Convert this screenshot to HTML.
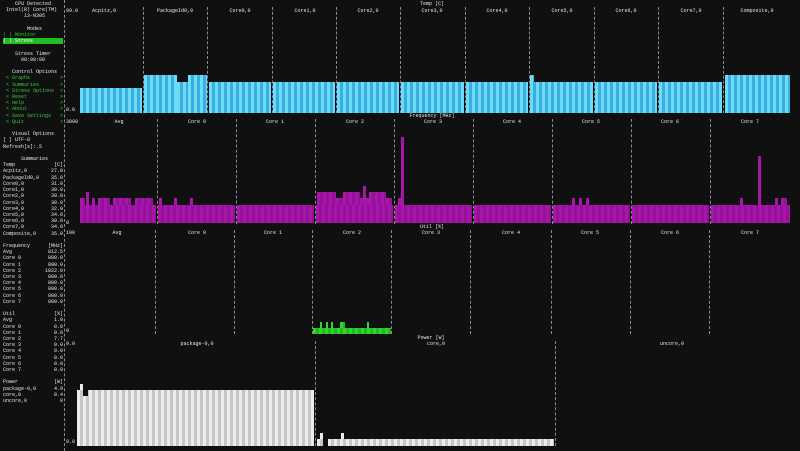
<!DOCTYPE html>
<html><head><meta charset="utf-8"><style>
*{margin:0;padding:0}
body{width:800px;height:451px;background:#101010;overflow:hidden;position:relative;font-family:"Liberation Mono",monospace;font-size:5px;color:#e8e8e8}
pre{position:absolute;left:3px;top:1px;font-family:inherit;font-size:5px;line-height:6.2px;white-space:pre;color:#e8e8e8}
.g{color:#33cc33}
.sel{background:#22bb22;color:#fff}
.t{position:absolute;white-space:nowrap;line-height:6px;transform:translateX(-50%)}
.l{position:absolute;white-space:nowrap;line-height:6px}
.v{position:absolute;width:0;border-left:1px dashed #8a8a8a}
.c{position:absolute;background:repeating-linear-gradient(90deg,#6cdcf6 0 3px,#3aaee0 3px 6px)}
.m{position:absolute;background:repeating-linear-gradient(90deg,#a616a8 0 3px,#96109a 3px 6px)}
.gr{position:absolute;background:repeating-linear-gradient(90deg,#2fd42f 0 3px,#22b822 3px 6px)}
.w{position:absolute;background:repeating-linear-gradient(90deg,#ececec 0 3px,#c6c6c6 3px 6px)}
</style></head><body>
<pre>    CPU Detected
 Intel(R) Core(TM)
       i3-N305

        Modes
<span class="g">( ) Monitor</span>
<span class="sel">( ) Stress          </span>

    Stress Timer
      00:00:00

   Control Options
<span class="g"> &lt; Graphs          &gt;
 &lt; Summaries       &gt;
 &lt; Stress Options  &gt;
 &lt; Reset           &gt;
 &lt; Help            &gt;
 &lt; About           &gt;
 &lt; Save Settings   &gt;
 &lt; Quit            &gt;</span>

   Visual Options
[ ] UTF-8
Refresh[s]:.5

      Summaries
Temp             [C]
Acpitz,0        27.0
PackageId0,0    35.0
Core0,0         31.0
Core1,0         30.0
Core2,0         30.0
Core3,0         30.0
Core4,0         32.0
Core5,0         34.0
Core6,0         30.0
Core7,0         34.0
Composite,0     35.0

Frequency      [MHz]
Avg            812.5
Core 0         800.0
Core 1         800.0
Core 2        1022.0
Core 3         800.0
Core 4         800.0
Core 5         800.0
Core 6         800.0
Core 7         800.0

Util             [%]
Avg              1.0
Core 0           0.0
Core 1           0.0
Core 2           7.7
Core 3           0.0
Core 4           0.0
Core 5           0.0
Core 6           0.0
Core 7           0.0

Power            [W]
package-0,0      4.9
core,0           0.4
uncore,0           0</pre>
<div class="v" style="left:64px;top:0;height:451px"></div>

<!-- TEMP -->
<div class="t" style="left:432px;top:1px">Temp [C]</div>
<div class="l" style="left:66px;top:8px">99.0</div>
<div class="l" style="left:66px;top:107px">0.0</div>
<div class="t" style="left:104px;top:8px">Acpitz,0</div>
<div class="t" style="left:175px;top:8px">PackageId0,0</div>
<div class="t" style="left:240px;top:8px">Core0,0</div>
<div class="t" style="left:305px;top:8px">Core1,0</div>
<div class="t" style="left:368px;top:8px">Core2,0</div>
<div class="t" style="left:432px;top:8px">Core3,0</div>
<div class="t" style="left:497px;top:8px">Core4,0</div>
<div class="t" style="left:562px;top:8px">Core5,0</div>
<div class="t" style="left:626px;top:8px">Core6,0</div>
<div class="t" style="left:691px;top:8px">Core7,0</div>
<div class="t" style="left:757px;top:8px">Composite,0</div>
<div class="v" style="left:143px;top:7px;height:106px"></div>
<div class="v" style="left:207px;top:7px;height:106px"></div>
<div class="v" style="left:272px;top:7px;height:106px"></div>
<div class="v" style="left:336px;top:7px;height:106px"></div>
<div class="v" style="left:400px;top:7px;height:106px"></div>
<div class="v" style="left:465px;top:7px;height:106px"></div>
<div class="v" style="left:529px;top:7px;height:106px"></div>
<div class="v" style="left:594px;top:7px;height:106px"></div>
<div class="v" style="left:658px;top:7px;height:106px"></div>
<div class="v" style="left:723px;top:7px;height:106px"></div>
<div class="c" style="left:80px;top:88px;width:62px;height:25px"></div>
<div class="c" style="left:144px;top:75px;width:33px;height:38px"></div>
<div class="c" style="left:177px;top:82px;width:11px;height:31px"></div>
<div class="c" style="left:188px;top:75px;width:19px;height:38px"></div>
<div class="c" style="left:209px;top:82px;width:62px;height:31px"></div>
<div class="c" style="left:273px;top:82px;width:62px;height:31px"></div>
<div class="c" style="left:337px;top:82px;width:62px;height:31px"></div>
<div class="c" style="left:401px;top:82px;width:63px;height:31px"></div>
<div class="c" style="left:466px;top:82px;width:62px;height:31px"></div>
<div class="c" style="left:530px;top:75px;width:4px;height:7px"></div>
<div class="c" style="left:530px;top:82px;width:63px;height:31px"></div>
<div class="c" style="left:595px;top:82px;width:62px;height:31px"></div>
<div class="c" style="left:659px;top:82px;width:63px;height:31px"></div>
<div class="c" style="left:725px;top:75px;width:65px;height:38px"></div>

<!-- FREQ -->
<div class="t" style="left:432px;top:113px">Frequency [MHz]</div>
<div class="l" style="left:66px;top:119px">3000</div>
<div class="l" style="left:66px;top:220px">0</div>
<div class="t" style="left:119px;top:119px">Avg</div>
<div class="t" style="left:197px;top:119px">Core 0</div>
<div class="t" style="left:275px;top:119px">Core 1</div>
<div class="t" style="left:355px;top:119px">Core 2</div>
<div class="t" style="left:433px;top:119px">Core 3</div>
<div class="t" style="left:512px;top:119px">Core 4</div>
<div class="t" style="left:591px;top:119px">Core 5</div>
<div class="t" style="left:670px;top:119px">Core 6</div>
<div class="t" style="left:750px;top:119px">Core 7</div>
<div class="v" style="left:157px;top:119px;height:105px"></div>
<div class="v" style="left:236px;top:119px;height:105px"></div>
<div class="v" style="left:315px;top:119px;height:105px"></div>
<div class="v" style="left:394px;top:119px;height:105px"></div>
<div class="v" style="left:473px;top:119px;height:105px"></div>
<div class="v" style="left:552px;top:119px;height:105px"></div>
<div class="v" style="left:631px;top:119px;height:105px"></div>
<div class="v" style="left:710px;top:119px;height:105px"></div>
<div class="m" style="left:80px;top:205px;width:76px;height:18px"></div>
<div class="m" style="left:158px;top:205px;width:77px;height:18px"></div>
<div class="m" style="left:237px;top:205px;width:77px;height:18px"></div>
<div class="m" style="left:316px;top:205px;width:77px;height:18px"></div>
<div class="m" style="left:395px;top:205px;width:77px;height:18px"></div>
<div class="m" style="left:474px;top:205px;width:77px;height:18px"></div>
<div class="m" style="left:553px;top:205px;width:77px;height:18px"></div>
<div class="m" style="left:632px;top:205px;width:77px;height:18px"></div>
<div class="m" style="left:711px;top:205px;width:79px;height:18px"></div>
<div class="m" style="left:80px;top:198px;width:5px;height:7px"></div>
<div class="m" style="left:86px;top:192px;width:3px;height:13px"></div>
<div class="m" style="left:92px;top:198px;width:3px;height:7px"></div>
<div class="m" style="left:98px;top:198px;width:12px;height:7px"></div>
<div class="m" style="left:113px;top:198px;width:18px;height:7px"></div>
<div class="m" style="left:135px;top:198px;width:18px;height:7px"></div>
<div class="m" style="left:159px;top:198px;width:3px;height:7px"></div>
<div class="m" style="left:174px;top:198px;width:3px;height:7px"></div>
<div class="m" style="left:190px;top:198px;width:3px;height:7px"></div>
<div class="m" style="left:317px;top:192px;width:19px;height:13px"></div>
<div class="m" style="left:336px;top:198px;width:7px;height:7px"></div>
<div class="m" style="left:343px;top:192px;width:17px;height:13px"></div>
<div class="m" style="left:360px;top:198px;width:3px;height:7px"></div>
<div class="m" style="left:363px;top:186px;width:3px;height:19px"></div>
<div class="m" style="left:366px;top:198px;width:3px;height:7px"></div>
<div class="m" style="left:369px;top:192px;width:17px;height:13px"></div>
<div class="m" style="left:386px;top:198px;width:6px;height:7px"></div>
<div class="m" style="left:398px;top:198px;width:3px;height:7px"></div>
<div class="m" style="left:401px;top:137px;width:3px;height:68px"></div>
<div class="m" style="left:572px;top:198px;width:3px;height:7px"></div>
<div class="m" style="left:579px;top:198px;width:3px;height:7px"></div>
<div class="m" style="left:586px;top:198px;width:3px;height:7px"></div>
<div class="m" style="left:740px;top:198px;width:3px;height:7px"></div>
<div class="m" style="left:758px;top:156px;width:3px;height:49px"></div>
<div class="m" style="left:775px;top:198px;width:3px;height:7px"></div>
<div class="m" style="left:781px;top:198px;width:6px;height:7px"></div>

<!-- UTIL -->
<div class="t" style="left:432px;top:224px">Util [%]</div>
<div class="l" style="left:66px;top:230px">100</div>
<div class="l" style="left:66px;top:328px">0</div>
<div class="t" style="left:117px;top:230px">Avg</div>
<div class="t" style="left:197px;top:230px">Core 0</div>
<div class="t" style="left:273px;top:230px">Core 1</div>
<div class="t" style="left:352px;top:230px">Core 2</div>
<div class="t" style="left:431px;top:230px">Core 3</div>
<div class="t" style="left:511px;top:230px">Core 4</div>
<div class="t" style="left:590px;top:230px">Core 5</div>
<div class="t" style="left:670px;top:230px">Core 6</div>
<div class="t" style="left:750px;top:230px">Core 7</div>
<div class="v" style="left:155px;top:230px;height:104px"></div>
<div class="v" style="left:234px;top:230px;height:104px"></div>
<div class="v" style="left:312px;top:230px;height:104px"></div>
<div class="v" style="left:391px;top:230px;height:104px"></div>
<div class="v" style="left:470px;top:230px;height:104px"></div>
<div class="v" style="left:551px;top:230px;height:104px"></div>
<div class="v" style="left:630px;top:230px;height:104px"></div>
<div class="v" style="left:709px;top:230px;height:104px"></div>
<div class="gr" style="left:313px;top:328px;width:78px;height:6px"></div>
<div class="gr" style="left:320px;top:322px;width:2px;height:6px"></div>
<div class="gr" style="left:326px;top:322px;width:2px;height:6px"></div>
<div class="gr" style="left:331px;top:322px;width:2px;height:6px"></div>
<div class="gr" style="left:340px;top:322px;width:5px;height:6px"></div>
<div class="gr" style="left:367px;top:322px;width:2px;height:6px"></div>

<!-- POWER -->
<div class="t" style="left:431px;top:335px">Power [W]</div>
<div class="l" style="left:66px;top:341px">9.0</div>
<div class="l" style="left:66px;top:439px">0.0</div>
<div class="t" style="left:197px;top:341px">package-0,0</div>
<div class="t" style="left:436px;top:341px">core,0</div>
<div class="t" style="left:672px;top:341px">uncore,0</div>
<div class="v" style="left:315px;top:341px;height:105px"></div>
<div class="v" style="left:555px;top:341px;height:105px"></div>
<div class="w" style="left:77px;top:390px;width:237px;height:56px"></div>
<div class="w" style="left:80px;top:384px;width:3px;height:6px"></div>
<div style="position:absolute;left:83px;top:390px;width:5px;height:6px;background:#101010"></div>
<div class="w" style="left:317px;top:439px;width:6px;height:7px"></div>
<div class="w" style="left:320px;top:433px;width:3px;height:6px"></div>
<div class="w" style="left:328px;top:439px;width:226px;height:7px"></div>
<div class="w" style="left:341px;top:433px;width:3px;height:6px"></div>
</body></html>
